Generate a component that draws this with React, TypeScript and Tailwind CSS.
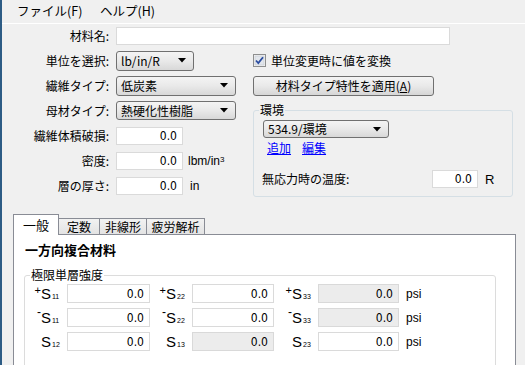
import React from "react";

const Arrow = () => (
  <svg width="8" height="5" viewBox="0 0 8 5" className="shrink-0">
    <path d="M0 0 H8 L4 4.5 Z" fill="#000" />
  </svg>
);

function Select({ w, h = 20, text }: { w: number; h?: number; text: string }) {
  return (
    <div
      className="flex items-center justify-between pl-[4px] pr-[7px] border border-[#707070] rounded-[3px] bg-linear-to-b from-[#f4f4f4] via-[#e9e9e9] to-[#d8d8d8] shrink-0"
      style={{ width: w, height: h }}
    >
      <span className="text-[12px] leading-none">{text}</span>
      <Arrow />
    </div>
  );
}

function Input({
  w,
  h = 18,
  value,
  disabled,
}: {
  w: number;
  h?: number;
  value?: string;
  disabled?: boolean;
}) {
  return (
    <div
      className={
        "flex items-center justify-end pr-[5px] border shrink-0 font-['DejaVu_Sans_Condensed','Liberation_Sans_Narrow','Liberation_Sans',sans-serif] text-[12px] leading-none " +
        (disabled ? "bg-[#ececec] border-[#d9d9d9]" : "bg-white border-[#dadada]")
      }
      style={{ width: w, height: h }}
    >
      {value}
    </div>
  );
}

function Row({ label, children }: { label: string; children: React.ReactNode }) {
  return (
    <div className="h-[25px] flex items-center shrink-0">
      <div className="w-[108px] text-right pr-[1px] leading-none">{label}</div>
      <div className="ml-[6px] flex items-center">{children}</div>
    </div>
  );
}

function SLabel({ sup, sub, w }: { sup?: "+" | "-"; sub: string; w: number }) {
  return (
    <div
      className="flex items-center justify-end pr-[3px] h-[19px] font-['Liberation_Sans',sans-serif] shrink-0"
      style={{ width: w }}
    >
      <span className="flex items-baseline leading-none">
        {sup === "+" && <span className="text-[11px] relative top-[-5px]">+</span>}
        {sup === "-" && <span className="text-[12px] relative top-[-7px]">-</span>}
        <span className="text-[15px]">S</span>
        <span className="text-[7px] ml-[1px] w-[12px]">{sub}</span>
      </span>
    </div>
  );
}

export default function App() {
  return (
    <div className="w-[525px] h-[365px] overflow-hidden bg-[#f0f0f0] flex text-[12px] leading-none text-black font-['Noto_Sans_CJK_JP',sans-serif]">
      <div className="w-[2px] bg-[#2d5c85] shrink-0" />
      <div className="flex-1 flex flex-col min-h-0">
        {/* menu */}
        <div className="h-[24px] shrink-0 border-b border-white flex items-center pl-[15px] text-[12.5px]">
          <span className="w-[83px]">ファイル(F)</span>
          <span>ヘルプ(H)</span>
        </div>

        {/* row 1 */}
        <div className="flex items-center mt-[3px] shrink-0">
          <div className="w-[108px] text-right pr-[1px]">材料名:</div>
          <div className="ml-[6px] w-[334px] h-[18px] bg-white border border-[#dadada]" />
        </div>

        {/* form */}
        <div className="flex mt-[3px] shrink-0">
          <div className="w-[251px] flex flex-col">
            <Row label="単位を選択:">
              <Select w={78} text="lb/in/R" />
            </Row>
            <Row label="繊維タイプ:">
              <Select w={120} text="低炭素" />
            </Row>
            <Row label="母材タイプ:">
              <Select w={120} h={19} text="熱硬化性樹脂" />
            </Row>
            <Row label="繊維体積破損:">
              <Input w={67} value="0.0" />
            </Row>
            <Row label="密度:">
              <Input w={67} value="0.0" />
              <span className="ml-[5px] font-['Liberation_Sans',sans-serif]">
                lbm/in<span className="text-[8px] relative top-[-3px]">3</span>
              </span>
            </Row>
            <Row label="層の厚さ:">
              <Input w={67} value="0.0" />
              <span className="ml-[7px] font-['Liberation_Sans',sans-serif]">in</span>
            </Row>
          </div>

          <div className="w-[260px] flex flex-col">
            <div className="h-[25px] flex items-center shrink-0">
              <svg width="13" height="13" viewBox="0 0 13 13" className="shrink-0">
                <rect x="0.5" y="0.5" width="12" height="12" fill="#f4f4f4" stroke="#8e8f8f" />
                <rect x="2" y="2" width="9" height="9" fill="#e2e6ec" stroke="#c4c8cf" strokeWidth="0.6" />
                <path d="M3 6.5 L5.3 9 L10 3.2" fill="none" stroke="#2b4da0" strokeWidth="1.8" />
              </svg>
              <span className="ml-[5px]">単位変更時に値を変換</span>
            </div>
            <div className="h-[25px] flex items-center shrink-0">
              <div className="w-[181px] h-[20px] border border-[#707070] rounded-[3px] bg-linear-to-b from-[#f4f4f4] via-[#e9e9e9] to-[#d6d6d6] flex items-center justify-center">
                材料タイプ特性を適用(<span className="underline">A</span>)
              </div>
            </div>
            <fieldset className="mt-[5px] w-[260px] h-[94px] shrink-0 border border-[#d5dfe5] rounded-[3px] pl-[9px]">
              <legend className="-ml-[4px] px-[1px] leading-[14px]">環境</legend>
              <div className="mt-[3px]">
                <Select w={126} h={18} text="534.9/環境" />
              </div>
              <div className="h-[16px] mt-[2px] flex items-center pl-[4px] text-[#0000ff]">
                <span className="underline">追加</span>
                <span className="underline ml-[11px]">編集</span>
              </div>
              <div className="mt-[14px] flex items-center">
                <div className="w-[170px] -ml-[1px]">無応力時の温度:</div>
                <Input w={46} value="0.0" />
                <span className="ml-[7px] font-['Liberation_Sans',sans-serif] text-[13px]">R</span>
              </div>
            </fieldset>
          </div>
        </div>

        {/* tabs */}
        <div className="mt-[16px] pl-[11px] flex items-end h-[20px] shrink-0 relative z-10">
          <div className="w-[46px] h-[21px] -mb-[1px] bg-white border-l border-t border-r border-[#898c95] flex items-center justify-center pb-[2px] text-[13px]">
            一般
          </div>
          <div className="w-[41px] h-[16px] border-t border-r border-[#898c95] bg-linear-to-b from-[#f2f2f2] to-[#e3e3e3] flex items-center justify-center">
            定数
          </div>
          <div className="w-[47px] h-[16px] border-t border-r border-[#898c95] bg-linear-to-b from-[#f2f2f2] to-[#e3e3e3] flex items-center justify-center">
            非線形
          </div>
          <div className="w-[58px] h-[16px] border-t border-r border-[#898c95] bg-linear-to-b from-[#f2f2f2] to-[#e3e3e3] flex items-center justify-center">
            疲労解析
          </div>
        </div>
        <div className="ml-[11px] w-[503px] flex-1 min-h-0 overflow-hidden bg-white border-l border-t border-r border-[#898c95] flex flex-col">
          <div className="pl-[11px] pt-[8px] font-bold text-[13px] leading-[14px] shrink-0">一方向複合材料</div>
          <fieldset className="mt-[11px] ml-[10px] w-[472px] h-[120px] shrink-0 border border-[#dcdcdc] rounded-[3px]">
            <legend className="ml-[5px] px-[1px] leading-[14px]">極限単層強度</legend>
            <div className="mt-[2px] flex flex-col gap-[5px]">
              <div className="flex items-center">
                <SLabel sup="+" sub="11" w={42} />
                <Input w={83} h={19} value="0.0" />
                <SLabel sup="+" sub="22" w={42} />
                <Input w={82} h={19} value="0.0" />
                <SLabel sup="+" sub="33" w={44} />
                <Input w={81} h={19} value="0.0" disabled />
                <span className="ml-[7px] font-['Liberation_Sans',sans-serif]">psi</span>
              </div>
              <div className="flex items-center">
                <SLabel sup="-" sub="11" w={42} />
                <Input w={83} h={19} value="0.0" />
                <SLabel sup="-" sub="22" w={42} />
                <Input w={82} h={19} value="0.0" />
                <SLabel sup="-" sub="33" w={44} />
                <Input w={81} h={19} value="0.0" disabled />
                <span className="ml-[7px] font-['Liberation_Sans',sans-serif]">psi</span>
              </div>
              <div className="flex items-center">
                <SLabel sub="12" w={42} />
                <Input w={83} h={19} value="0.0" />
                <SLabel sub="13" w={42} />
                <Input w={82} h={19} value="0.0" disabled />
                <SLabel sub="23" w={44} />
                <Input w={81} h={19} value="0.0" />
                <span className="ml-[7px] font-['Liberation_Sans',sans-serif]">psi</span>
              </div>
            </div>
          </fieldset>
        </div>
      </div>
    </div>
  );
}
